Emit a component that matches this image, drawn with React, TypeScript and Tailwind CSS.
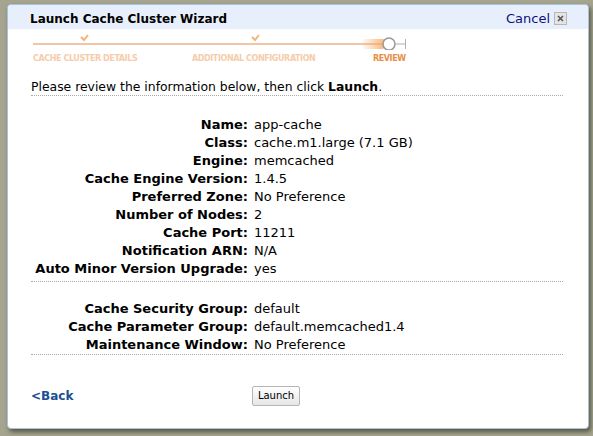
import React from 'react';

const rows1: [string, string][] = [
  ['Name:', 'app-cache'],
  ['Class:', 'cache.m1.large (7.1 GB)'],
  ['Engine:', 'memcached'],
  ['Cache Engine Version:', '1.4.5'],
  ['Preferred Zone:', 'No Preference'],
  ['Number of Nodes:', '2'],
  ['Cache Port:', '11211'],
  ['Notification ARN:', 'N/A'],
  ['Auto Minor Version Upgrade:', 'yes'],
];

const rows2: [string, string][] = [
  ['Cache Security Group:', 'default'],
  ['Cache Parameter Group:', 'default.memcached1.4'],
  ['Maintenance Window:', 'No Preference'],
];

const Rows = ({ rows }: { rows: [string, string][] }) => (
  <div className="grid grid-cols-[217px_1fr] gap-x-[6px] text-[13px]">
    {rows.map(([k, v]) => (
      <React.Fragment key={k}>
        <div className="text-right font-bold h-[18px] leading-[18px]">{k}</div>
        <div className="h-[18px] leading-[18px]">{v}</div>
      </React.Fragment>
    ))}
  </div>
);

// progress track of the wizard
const Track = () => (
  <svg width="380" height="18" viewBox="0 0 380 18" className="block">
    <defs>
      <linearGradient id="glow" x1="0" x2="1" y1="0" y2="0">
        <stop offset="0" stopColor="#f7a55c" stopOpacity="0" />
        <stop offset="1" stopColor="#f7a55c" stopOpacity="0.9" />
      </linearGradient>
    </defs>
    <line x1="0" y1="12" x2="352" y2="12" stroke="#ebb389" strokeWidth="1.5" />
    <path d="M48 5 L51 8 L55 3" fill="none" stroke="#f1b47c" strokeWidth="2" />
    <path d="M219 5 L222 8 L226 3" fill="none" stroke="#f1b47c" strokeWidth="2" />
    <rect x="328" y="7" width="26" height="10" rx="5" fill="url(#glow)" />
    <circle cx="356" cy="12" r="6" fill="#fff" stroke="#9b9b9b" strokeWidth="1.6" />
    <line x1="362" y1="12" x2="372" y2="12" stroke="#b0b0b0" strokeWidth="1" />
    <line x1="372.5" y1="7" x2="372.5" y2="17" stroke="#b0b0b0" strokeWidth="1" />
  </svg>
);

export default function App() {
  return (
    <div className="w-[593px] h-[436px] bg-[#a4a48f] pt-[4px] pl-[7px] font-['DejaVu_Sans',sans-serif] text-black">
      <div className="w-[582px] h-[425px] bg-white border border-[#a9c1e0] rounded-[4px] shadow-[2px_3px_4px_rgba(40,40,20,0.6)] flex flex-col overflow-hidden">
        <div className="h-[24px] bg-[#e7effc] flex items-center pl-[22px] pr-[21px] pt-[3px]">
          <div className="font-bold text-[12px] flex-1">Launch Cache Cluster Wizard</div>
          <div className="flex items-center gap-[4px]">
            <span className="text-[#10107a] text-[13px]">Cancel</span>
            <span className="w-[13px] h-[13px] border border-[#b8b8b8] bg-[#e4e4e4] flex items-center justify-center">
              <svg width="7" height="7" viewBox="0 0 7 7">
                <path d="M1 1 L6 6 M6 1 L1 6" stroke="#555" strokeWidth="1.6" />
              </svg>
            </span>
          </div>
        </div>

        <div className="pl-[25px] pt-[3px]">
          <Track />
          <div className="grid grid-cols-[159px_181px_auto] mt-[4px] text-[8px] leading-[10px] font-bold tracking-[-0.4px]">
            <span className="text-[#f5ccaa]">CACHE CLUSTER DETAILS</span>
            <span className="text-[#f5ccaa]">ADDITIONAL CONFIGURATION</span>
            <span className="text-[#e98d45]">REVIEW</span>
          </div>
        </div>

        <div className="pl-[23px] pr-[25px] mt-[15px]">
          <div className="border-b border-dotted border-[#aaaaaa] text-[12.4px] leading-[16px]">
            Please review the information below, then click <b>Launch</b>.
          </div>
          <div className="pt-[20px] pb-[3px] border-b border-dotted border-[#aaaaaa]">
            <Rows rows={rows1} />
          </div>
          <div className="pt-[18px] border-b border-dotted border-[#aaaaaa]">
            <Rows rows={rows2} />
          </div>
          <div className="flex items-center mt-[31px]">
            <span className="text-[#1b4f8f] font-bold text-[12px] w-[221px]">&lt;Back</span>
            <button className="h-[20px] w-[48px] border border-[#b5b5b5] bg-gradient-to-b from-white to-[#e6e6e6] text-[10px] leading-none rounded-[2px]">
              Launch
            </button>
          </div>
        </div>
      </div>
    </div>
  );
}
